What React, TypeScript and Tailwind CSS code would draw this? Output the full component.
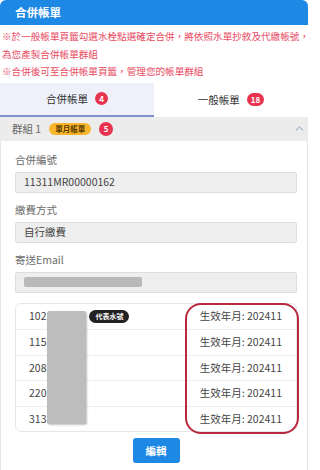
import { ChevronUp } from 'lucide-react'

const ROWS = ['102', '115', '208', '220', '313']

function CountBadge({ n }: { n: string }) {
  return (
    <span className="ml-[7px] inline-flex h-[13px] min-w-[13px] items-center justify-center rounded-full bg-[#e8334f] px-[4px] text-[8px] font-bold leading-none text-white">
      {n}
    </span>
  )
}

function Field({ label, children }: { label: string; children: React.ReactNode }) {
  return (
    <div className="flex flex-col">
      <span className="h-[16px] text-[10.5px] leading-[16px] text-[#6b6b6b]">{label}</span>
      <div className="mt-[4px] flex h-[21px] items-center rounded-[2px] border border-[#dedede] bg-[#eeeeee] px-[8px] text-[10.5px] text-[#444]">
        {children}
      </div>
    </div>
  )
}

export default function App() {
  return (
    <div className="h-[470px] w-[310px] overflow-hidden bg-white font-['Noto_Sans_CJK_TC','Noto_Sans',sans-serif]">
      <div className="mr-[2px] flex h-full flex-col">
        {/* header */}
        <div className="flex h-[25px] items-center rounded-t-[6px] bg-[#1e88e5] px-[15px] text-[11.5px] font-bold text-white">
          合併帳單
        </div>

        {/* notes */}
        <div className="px-[2px] pt-[3px] text-[9.6px] leading-[17.5px] text-[#e84a5f]">
          <p className="whitespace-nowrap">※於一般帳單頁籤勾選水栓點選確定合併，將依照水單抄敘及代繳帳號，</p>
          <p>為您產製合併帳單群組</p>
          <p>※合併後可至合併帳單頁籤，管理您的帳單群組</p>
        </div>

        {/* tabs */}
        <div className="mt-[2px] flex h-[34px]">
          <div className="flex flex-1 items-center justify-center border-b-2 border-[#7d8fcc] bg-[#eef1f9] text-[10.5px] text-[#333]">
            合併帳單
            <CountBadge n="4" />
          </div>
          <div className="flex flex-1 items-center justify-center text-[10.5px] text-[#333]">
            一般帳單
            <CountBadge n="18" />
          </div>
        </div>

        {/* group header */}
        <div className="flex h-[24px] items-center bg-[#ececec] pl-[12px] pr-[2px]">
          <span className="text-[10.5px] text-[#666]">群組 1</span>
          <span className="ml-[8px] inline-flex h-[12px] items-center rounded-full bg-[#f9b52c] px-[6px] text-[7.5px] font-bold leading-none text-[#5a3a00]">
            單月帳單
          </span>
          <span className="ml-[8px] inline-flex size-[14px] items-center justify-center rounded-full bg-[#e8334f] text-[8px] font-bold leading-none text-white">
            5
          </span>
          <ChevronUp className="ml-auto size-[13px] text-[#7a93b8]" strokeWidth={1.75} />
        </div>

        {/* body */}
        <div className="flex flex-1 flex-col border-x border-[#e6e6e6] pb-[6px] pl-[14px] pr-[10px] pt-[11px]">
          <div className="flex flex-col gap-[9px]">
            <Field label="合併編號">11311MR00000162</Field>
            <Field label="繳費方式">自行繳費</Field>
            <Field label="寄送Email">
              <span className="block h-[10px] w-[118px] rounded-[2px] bg-[#b9b9b9]" />
            </Field>
          </div>

          <div className="relative mt-[10px] rounded-[6px] border border-[#e6e6e6]">
            {ROWS.map((r, i) => (
              <div
                key={r}
                className={`flex h-[25.5px] items-center pl-[13px] pr-[14px] text-[10.5px] text-[#444] ${
                  i > 0 ? 'border-t border-[#eeeeee]' : ''
                }`}
              >
                <span>{r}</span>
                {i === 0 && (
                  <span className="ml-[43px] inline-flex h-[13px] items-center rounded-full bg-[#222] px-[6px] text-[7px] font-bold leading-none text-white">
                    代表水號
                  </span>
                )}
                <span className="ml-auto">生效年月: 202411</span>
              </div>
            ))}
            {/* redaction */}
            <div className="absolute left-[31px] top-[7px] h-[113px] w-[39px] rounded-[2px] bg-[#bdbdbd] shadow-[1px_1px_2px_rgba(0,0,0,0.25)]" />
            {/* highlight ring */}
            <div className="absolute -right-[3px] -top-[1px] h-[131px] w-[114px] rounded-[16px] border-2 border-[#b9283d]" />
          </div>

          <div className="mt-[6px] flex justify-center">
            <button
              type="button"
              className="h-[25px] w-[47px] rounded-[3px] bg-[#1e88e5] text-[10.5px] font-bold text-white"
            >
              編輯
            </button>
          </div>
        </div>
      </div>
    </div>
  )
}
